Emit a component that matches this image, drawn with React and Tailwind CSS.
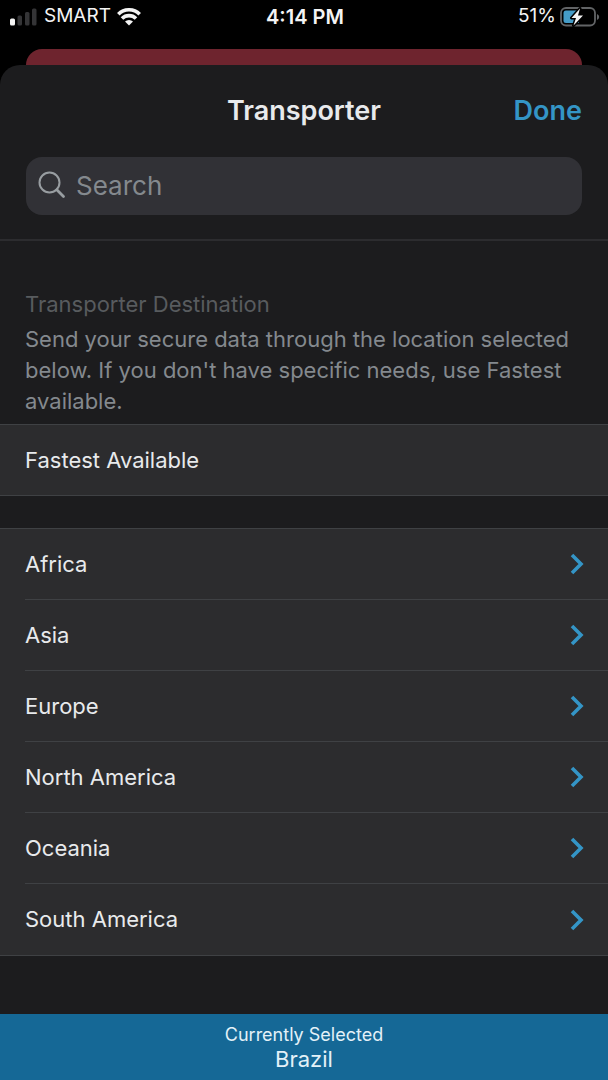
import React, { useState } from "react";

const regions = ["Africa", "Asia", "Europe", "North America", "Oceania", "South America"];

const SignalIcon = () => (
  <svg viewBox="0 0 28 18" className="w-7 h-[18px]" aria-hidden="true">
    <rect x="0" y="10.5" width="5" height="7" rx="1.5" fill="#f4f4f4" />
    <rect x="7.5" y="7.5" width="4.5" height="10" rx="1.5" fill="#343436" />
    <rect x="15" y="4" width="4.5" height="13.5" rx="1.5" fill="#343436" />
    <rect x="22" y="0.5" width="4.5" height="17" rx="1.5" fill="#343436" />
  </svg>
);

const WifiIcon = () => (
  <svg viewBox="0 0 24 18" className="w-6 h-[18px]" fill="none" stroke="#f4f4f4" strokeWidth="3.6" aria-hidden="true">
    <path d="M1.3 6.2 A15.2 15.2 0 0 1 22.7 6.2" />
    <path d="M5 10.5 A9.9 9.9 0 0 1 19 10.5" />
    <path d="M8 13.6 A5.6 5.6 0 0 1 16 13.6 L12 17.5 Z" fill="#f4f4f4" stroke="none" />
  </svg>
);

const BatteryIcon = () => (
  <svg viewBox="0 0 40 20" className="w-10 h-5" aria-hidden="true">
    <rect x="1" y="1" width="34" height="17.5" rx="5" fill="none" stroke="#626466" strokeWidth="1.8" />
    <path d="M37 7 v6 q2.2 -.8 2.2 -3 t-2.2 -3z" fill="#626466" />
    <path d="M6 3.5 H19 V16 H6 Q3.5 16 3.5 13.5 V6 Q3.5 3.5 6 3.5z" fill="#459cc7" />
    <path
      d="M20 1.5 L11.5 11 H16 L13.5 18.5 L23 8.5 H18 L20 1.5z"
      fill="#f4f4f4"
      stroke="#000"
      strokeWidth="3"
      strokeLinejoin="round"
      paintOrder="stroke"
    />
  </svg>
);

const SearchIcon = () => (
  <svg viewBox="0 0 28 28" className="w-7 h-7 shrink-0" fill="none" stroke="#989da1" strokeLinecap="round" aria-hidden="true">
    <circle cx="11.5" cy="11.5" r="10" strokeWidth="2" />
    <path d="M18.8 18.8 L25.5 25.5" strokeWidth="2.8" />
  </svg>
);

const ChevronIcon = () => (
  <svg viewBox="0 0 14 22" className="w-[14px] h-[22px]" fill="none" stroke="#3495c6" strokeWidth="3.6" aria-hidden="true">
    <path d="M2 2 L11 11 L2 20" />
  </svg>
);

const StatusBar = () => (
  <div className="grid grid-cols-3 items-center h-[33px] pl-[10px] pr-2 text-[19px] text-[#f4f4f4]">
    <div className="flex items-center gap-[6px]">
      <SignalIcon />
      <span>SMART</span>
      <WifiIcon />
    </div>
    <span className="text-center text-[20px] font-semibold">4:14 PM</span>
    <div className="flex items-center justify-end gap-1">
      <span>51%</span>
      <BatteryIcon />
    </div>
  </div>
);

export default function App() {
  const [query, setQuery] = useState("");

  return (
    <div className="min-h-screen flex flex-col bg-black font-[Inter,'Liberation_Sans',sans-serif]">
      <StatusBar />
      {/* edge of the screen underneath the sheet */}
      <div className="mt-4 mx-[26px] h-4 rounded-t-2xl bg-[#6e242e]" />

      <main className="flex-1 flex flex-col rounded-t-[20px] bg-[#1c1c1e]">
        <header className="border-b-2 border-[#2c2c2f] px-[26px] pb-6">
          <div className="grid grid-cols-[1fr_auto_1fr] items-center h-[92px]">
            <h1 className="col-start-2 text-[27px] font-semibold text-[#e8eaec]">Transporter</h1>
            <button type="button" className="justify-self-end text-[27px] font-semibold text-[#3495c6]">
              Done
            </button>
          </div>
          <label className="flex items-center gap-[10px] h-[58px] px-3 pb-[2px] rounded-2xl bg-[#313136]">
            <SearchIcon />
            <input
              type="search"
              aria-label="Search"
              placeholder="Search"
              value={query}
              onChange={(e) => setQuery(e.target.value)}
              className="min-w-0 flex-1 bg-transparent text-[26px] text-[#e8eaec] placeholder:text-[#84898e] outline-none"
            />
          </label>
        </header>

        <section className="px-[25px] pt-[47px] pb-[7px] text-[22px]">
          <h2 className="leading-8 mb-1 text-[#585b5e]">Transporter Destination</h2>
          <p className="leading-[31px] text-[#84898e]">
            Send your secure data through the location selected below. If you don't have specific needs, use
            Fastest available.
          </p>
        </section>

        <button
          type="button"
          className="h-[72px] px-[25px] text-left text-[22px] text-[#e8eaec] bg-[#2c2c2e] border-y border-[#3f4144]"
        >
          Fastest Available
        </button>

        <ul className="mt-8 mb-14 bg-[#2c2c2e] border-y border-[#3f4144]">
          {regions
            .filter((name) => name.toLowerCase().includes(query.toLowerCase()))
            .map((name) => (
              <li key={name} className="group pl-[25px]">
                <button
                  type="button"
                  className="flex items-center justify-between w-full h-[71px] pr-6 text-[22px] text-[#e8eaec] border-b border-[#3f4144] group-last:border-b-0"
                >
                  {name}
                  <ChevronIcon />
                </button>
              </li>
            ))}
        </ul>

        <footer className="mt-auto flex flex-col items-center py-[9px] bg-[#156896] text-[#e3f1f8]">
          <span className="text-lg leading-6">Currently Selected</span>
          <span className="text-[22px] leading-6">Brazil</span>
        </footer>
      </main>
    </div>
  );
}
